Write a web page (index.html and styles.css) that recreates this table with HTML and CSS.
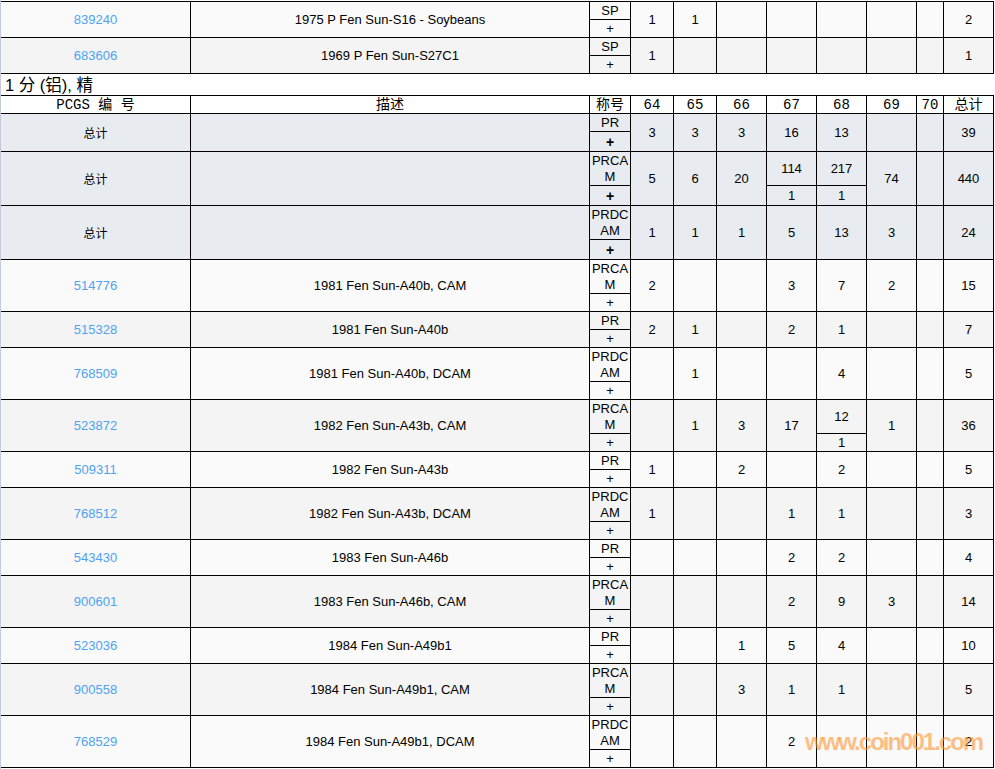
FILE: index.html
```html
<!DOCTYPE html>
<html lang="zh">
<head>
<meta charset="utf-8">
<title>PCGS 1 分</title>
<link rel="stylesheet" href="styles.css">
</head>
<body>
<div class="page">
<table class="pop">
<colgroup>
<col class="w-id"><col class="w-desc"><col class="w-grade">
<col class="w-43"><col class="w-43"><col class="w-50"><col class="w-50"><col class="w-50"><col class="w-50"><col class="w-27"><col class="w-50">
</colgroup>
<tbody>
<tr class="r-a"><td class="id" rowspan="2"><a href="#">839240</a></td><td class="desc" rowspan="2">1975 P Fen Sun-S16 - Soybeans</td><td class="g">SP</td><td rowspan="2">1</td><td rowspan="2">1</td><td rowspan="2"></td><td rowspan="2"></td><td rowspan="2"></td><td rowspan="2"></td><td rowspan="2"></td><td rowspan="2">2</td></tr>
<tr class="r-a"><td class="p">+</td></tr>
<tr class="r-b"><td class="id" rowspan="2"><a href="#">683606</a></td><td class="desc" rowspan="2">1969 P Fen Sun-S27C1</td><td class="g">SP</td><td rowspan="2">1</td><td rowspan="2"></td><td rowspan="2"></td><td rowspan="2"></td><td rowspan="2"></td><td rowspan="2"></td><td rowspan="2"></td><td rowspan="2">1</td></tr>
<tr class="r-b"><td class="p">+</td></tr>

<tr class="title"><td colspan="11">1 分 (铝), 精</td></tr>
<tr class="head"><td>PCGS 编 号</td><td>描述</td><td>称号</td><td>64</td><td>65</td><td>66</td><td>67</td><td>68</td><td>69</td><td>70</td><td>总计</td></tr>

<tr class="sum"><td class="id cjk" rowspan="2">总计</td><td class="desc" rowspan="2"></td><td class="g">PR</td><td rowspan="2">3</td><td rowspan="2">3</td><td rowspan="2">3</td><td rowspan="2">16</td><td rowspan="2">13</td><td rowspan="2"></td><td rowspan="2"></td><td rowspan="2">39</td></tr>
<tr class="sum"><td class="p pb">+</td></tr>
<tr class="sum"><td class="id cjk" rowspan="2">总计</td><td class="desc" rowspan="2"></td><td class="g">PRCAM</td><td rowspan="2">5</td><td rowspan="2">6</td><td rowspan="2">20</td><td>114</td><td>217</td><td rowspan="2">74</td><td rowspan="2"></td><td rowspan="2">440</td></tr>
<tr class="sum"><td class="p pb">+</td><td>1</td><td>1</td></tr>
<tr class="sum"><td class="id cjk" rowspan="2">总计</td><td class="desc" rowspan="2"></td><td class="g">PRDCAM</td><td rowspan="2">1</td><td rowspan="2">1</td><td rowspan="2">1</td><td rowspan="2">5</td><td rowspan="2">13</td><td rowspan="2">3</td><td rowspan="2"></td><td rowspan="2">24</td></tr>
<tr class="sum"><td class="p pb">+</td></tr>

<tr class="r-a"><td class="id" rowspan="2"><a href="#">514776</a></td><td class="desc" rowspan="2">1981 Fen Sun-A40b, CAM</td><td class="g">PRCAM</td><td rowspan="2">2</td><td rowspan="2"></td><td rowspan="2"></td><td rowspan="2">3</td><td rowspan="2">7</td><td rowspan="2">2</td><td rowspan="2"></td><td rowspan="2">15</td></tr>
<tr class="r-a"><td class="p">+</td></tr>
<tr class="r-b"><td class="id" rowspan="2"><a href="#">515328</a></td><td class="desc" rowspan="2">1981 Fen Sun-A40b</td><td class="g">PR</td><td rowspan="2">2</td><td rowspan="2">1</td><td rowspan="2"></td><td rowspan="2">2</td><td rowspan="2">1</td><td rowspan="2"></td><td rowspan="2"></td><td rowspan="2">7</td></tr>
<tr class="r-b"><td class="p">+</td></tr>
<tr class="r-a"><td class="id" rowspan="2"><a href="#">768509</a></td><td class="desc" rowspan="2">1981 Fen Sun-A40b, DCAM</td><td class="g">PRDCAM</td><td rowspan="2"></td><td rowspan="2">1</td><td rowspan="2"></td><td rowspan="2"></td><td rowspan="2">4</td><td rowspan="2"></td><td rowspan="2"></td><td rowspan="2">5</td></tr>
<tr class="r-a"><td class="p">+</td></tr>
<tr class="r-b"><td class="id" rowspan="2"><a href="#">523872</a></td><td class="desc" rowspan="2">1982 Fen Sun-A43b, CAM</td><td class="g">PRCAM</td><td rowspan="2"></td><td rowspan="2">1</td><td rowspan="2">3</td><td rowspan="2">17</td><td>12</td><td rowspan="2">1</td><td rowspan="2"></td><td rowspan="2">36</td></tr>
<tr class="r-b"><td class="p">+</td><td>1</td></tr>
<tr class="r-a"><td class="id" rowspan="2"><a href="#">509311</a></td><td class="desc" rowspan="2">1982 Fen Sun-A43b</td><td class="g">PR</td><td rowspan="2">1</td><td rowspan="2"></td><td rowspan="2">2</td><td rowspan="2"></td><td rowspan="2">2</td><td rowspan="2"></td><td rowspan="2"></td><td rowspan="2">5</td></tr>
<tr class="r-a"><td class="p">+</td></tr>
<tr class="r-b"><td class="id" rowspan="2"><a href="#">768512</a></td><td class="desc" rowspan="2">1982 Fen Sun-A43b, DCAM</td><td class="g">PRDCAM</td><td rowspan="2">1</td><td rowspan="2"></td><td rowspan="2"></td><td rowspan="2">1</td><td rowspan="2">1</td><td rowspan="2"></td><td rowspan="2"></td><td rowspan="2">3</td></tr>
<tr class="r-b"><td class="p">+</td></tr>
<tr class="r-a"><td class="id" rowspan="2"><a href="#">543430</a></td><td class="desc" rowspan="2">1983 Fen Sun-A46b</td><td class="g">PR</td><td rowspan="2"></td><td rowspan="2"></td><td rowspan="2"></td><td rowspan="2">2</td><td rowspan="2">2</td><td rowspan="2"></td><td rowspan="2"></td><td rowspan="2">4</td></tr>
<tr class="r-a"><td class="p">+</td></tr>
<tr class="r-b"><td class="id" rowspan="2"><a href="#">900601</a></td><td class="desc" rowspan="2">1983 Fen Sun-A46b, CAM</td><td class="g">PRCAM</td><td rowspan="2"></td><td rowspan="2"></td><td rowspan="2"></td><td rowspan="2">2</td><td rowspan="2">9</td><td rowspan="2">3</td><td rowspan="2"></td><td rowspan="2">14</td></tr>
<tr class="r-b"><td class="p">+</td></tr>
<tr class="r-a"><td class="id" rowspan="2"><a href="#">523036</a></td><td class="desc" rowspan="2">1984 Fen Sun-A49b1</td><td class="g">PR</td><td rowspan="2"></td><td rowspan="2"></td><td rowspan="2">1</td><td rowspan="2">5</td><td rowspan="2">4</td><td rowspan="2"></td><td rowspan="2"></td><td rowspan="2">10</td></tr>
<tr class="r-a"><td class="p">+</td></tr>
<tr class="r-b"><td class="id" rowspan="2"><a href="#">900558</a></td><td class="desc" rowspan="2">1984 Fen Sun-A49b1, CAM</td><td class="g">PRCAM</td><td rowspan="2"></td><td rowspan="2"></td><td rowspan="2">3</td><td rowspan="2">1</td><td rowspan="2">1</td><td rowspan="2"></td><td rowspan="2"></td><td rowspan="2">5</td></tr>
<tr class="r-b"><td class="p">+</td></tr>
<tr class="r-a"><td class="id" rowspan="2"><a href="#">768529</a></td><td class="desc" rowspan="2">1984 Fen Sun-A49b1, DCAM</td><td class="g">PRDCAM</td><td rowspan="2"></td><td rowspan="2"></td><td rowspan="2"></td><td rowspan="2">2</td><td rowspan="2"></td><td rowspan="2"></td><td rowspan="2"></td><td rowspan="2">2</td></tr>
<tr class="r-a"><td class="p">+</td></tr>
</tbody>
</table>
</div>
<div class="watermark">www.coin001.com</div>
</body>
</html>
```

FILE: styles.css
```css
html, body {
  margin: 0;
  padding: 0;
  background: #ffffff;
}
body {
  font-family: "Liberation Sans", Arial, "Noto Sans CJK SC", sans-serif;
  font-size: 13px;
  color: #000;
}
.page {
  border-left: 1px solid #c6cad8;
  padding-top: 1px;
  min-height: 768px;
}
.pop {
  border-collapse: separate;
  border-spacing: 0;
  table-layout: fixed;
  width: 993px;
  border-top: 1px solid #000;
}
.w-id { width: 190px; }
.w-desc { width: 399px; }
.w-grade { width: 41px; }
.w-43 { width: 43px; }
.w-50 { width: 50px; }
.w-27 { width: 27px; }

.pop td {
  border-right: 1px solid #000;
  border-bottom: 1px solid #000;
  padding: 1px 0 0 0;
  line-height: 16px;
  text-align: center;
  vertical-align: middle;
}
.pop td.g {
  word-break: break-all;
}
.pop td.pb {
  font-weight: bold;
  line-height: 18px;
  font-size: 14px;
}
.id a {
  color: #4da3f2;
  text-decoration: none;
}
.cjk {
  font-family: "Noto Sans CJK SC", sans-serif;
  font-size: 12px;
}
.r-a td { background: #fafafa; }
.r-b td { background: #f4f4f4; }
.sum td { background: #e8ecf0; }

.pop .title td {
  background: #fff;
  border-right: none;
  text-align: left;
  padding: 1px 0 0 4px;
  line-height: 20px;
  font-size: 16.5px;
  font-family: "Liberation Sans", "Noto Sans CJK SC", sans-serif;
}
.pop .head td {
  background: #fff;
  font-family: "Liberation Mono", "Noto Sans CJK SC", monospace;
  font-size: 14px;
  white-space: pre;
}
.watermark {
  position: absolute;
  left: 805px;
  top: 730px;
  font-family: "Liberation Sans", Arial, sans-serif;
  font-weight: bold;
  font-size: 24px;
  letter-spacing: -2px;
  line-height: 1;
  color: rgba(255, 150, 50, 0.6);
  pointer-events: none;
}
```
